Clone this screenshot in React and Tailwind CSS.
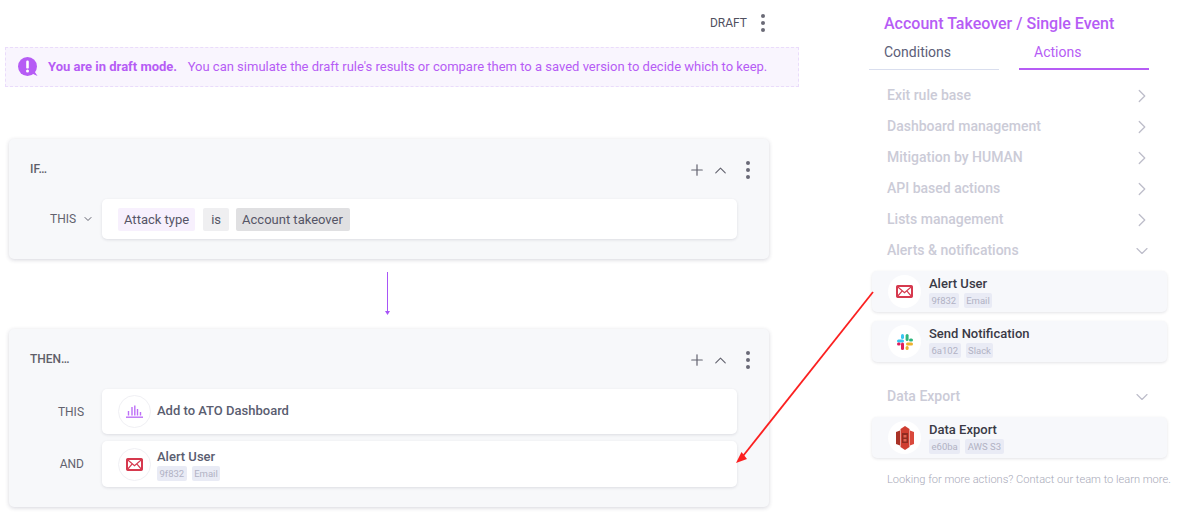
import { ChevronDown, ChevronRight, ChevronUp, Plus } from 'lucide-react';

const Dots = ({ className = '' }) => (
  <svg width="6" height="20" viewBox="0 0 6 20" className={className}>
    <circle cx="3" cy="3" r="2" fill="#6a6a76" />
    <circle cx="3" cy="10" r="2" fill="#6a6a76" />
    <circle cx="3" cy="17" r="2" fill="#6a6a76" />
  </svg>
);

const MailIcon = () => (
  <svg width="17" height="13" viewBox="0 0 17 13" fill="none" stroke="#d6394e">
    <rect x="1" y="1" width="15" height="11" rx="0.8" strokeWidth="2" />
    <path d="M1 1.2 L8.5 7.6 L16 1.2 M1 12 L6.2 5.8 M16 12 L10.8 5.8" strokeWidth="1.2" />
  </svg>
);

const SlackIcon = () => (
  <svg width="16" height="16" viewBox="0 0 16 16">
    <rect x="0" y="5.4" width="7" height="3" rx="1.5" fill="#36c5f0" />
    <rect x="4" y="0" width="3" height="5" rx="1.5" fill="#36c5f0" />
    <rect x="8.6" y="0" width="3" height="7" rx="1.5" fill="#2eb67d" />
    <rect x="12" y="4.4" width="4" height="3" rx="1.5" fill="#2eb67d" />
    <rect x="9" y="8.6" width="7" height="3" rx="1.5" fill="#ecb22e" />
    <rect x="8.6" y="12" width="3" height="4" rx="1.5" fill="#ecb22e" />
    <rect x="4" y="8.6" width="3" height="7.4" rx="1.5" fill="#e01e5a" />
    <rect x="0" y="8.6" width="3.6" height="3" rx="1.5" fill="#e01e5a" />
  </svg>
);

const S3Icon = () => (
  <svg width="18" height="24" viewBox="0 0 18 24">
    <path d="M0 6 L4 4.5 V19.5 L0 18 Z" fill="#a93226" />
    <path d="M18 6 L14 4.5 V19.5 L18 18 Z" fill="#d9483b" />
    <path d="M4.5 3 L9 0 L13.5 3 V21 L9 24 L4.5 21 Z" fill="#cf3d30" />
    <path d="M6 7 H12 V17 H6 Z" fill="#8f2a20" />
    <path d="M7.5 9 H10.5 V11.5 H7.5 Z M7.5 13 H10.5 V15.5 H7.5 Z" fill="#e2604f" />
  </svg>
);

const BarsIcon = () => (
  <svg width="17" height="13" viewBox="0 0 17 13" fill="none" stroke="#bd6ff7" strokeWidth="1.4">
    <path d="M0 12.2 H17" />
    <path d="M2.5 10.5 V6 M6 10.5 V2 M8.8 10.5 V0.5 M11.5 10.5 V4 M14.5 10.5 V7" />
  </svg>
);

const DraftIcon = () => (
  <svg width="20" height="20" viewBox="0 0 20 20" className="shrink-0">
    <circle cx="9.5" cy="9.5" r="9.5" fill="#b65cf5" />
    <path d="M13 16 L19.5 19 L15.5 13 Z" fill="#b65cf5" />
    <rect x="8.2" y="3.6" width="2.6" height="8" rx="1.2" fill="#fff" />
    <circle cx="9.5" cy="14" r="1.5" fill="#fff" />
  </svg>
);

const Tag = ({ children }) => (
  <span className="h-[15px] px-[2.5px] rounded-[2px] bg-[#e9ebf5] text-[#b1b2c4] text-[9.5px] leading-[15px]">
    {children}
  </span>
);

function IconCircle({ children, border }) {
  return (
    <div
      className={`w-[33px] h-[33px] rounded-full bg-white flex items-center justify-center shrink-0 ${
        border ? 'border border-[#f0f0f4]' : ''
      }`}
    >
      {children}
    </div>
  );
}

function BlockHeader({ title }) {
  return (
    <div className="flex items-center justify-between pl-[21px] pr-[18px] h-[20px]">
      <span className="text-[12px] font-medium text-[#5f5f69]">{title}</span>
      <div className="flex items-center mt-[2px] text-[#62626e]">
        <Plus size={18} strokeWidth={1.6} />
        <ChevronUp size={19} strokeWidth={1.4} className="ml-[5px]" />
        <Dots className="ml-[15px]" />
      </div>
    </div>
  );
}

const Row = ({ label, tall, children }) => (
  <div className="flex items-stretch">
    <div className="w-[76px] shrink-0 flex items-center justify-end pr-[1px] text-[12px] text-[#62626e]">{label}</div>
    <div
      className={`ml-[17px] w-[635px] ${tall ? 'h-[46px]' : 'h-[45px]'} bg-white rounded-[5px] shadow-[0_1px_3px_rgba(30,30,60,0.12)] flex items-center pl-[16px] gap-[6px]`}
    >
      {children}
    </div>
  </div>
);

function ActionCard({ title, tags, icon }) {
  return (
    <div className="ml-[3px] w-[295px] h-[41px] rounded-[5px] bg-[#f7f8fb] shadow-[0_1px_3px_rgba(30,30,60,0.12)] flex items-center pl-[16px] gap-[8px]">
      <IconCircle>{icon}</IconCircle>
      <div className="flex flex-col items-start">
        <span className="text-[13px] leading-[15px] font-medium text-[#3a3a46]">{title}</span>
        <div className="flex gap-[5px] mt-[2px]">
          {tags.map((t) => (
            <Tag key={t}>{t}</Tag>
          ))}
        </div>
      </div>
    </div>
  );
}

const SECTIONS = ['Exit rule base', 'Dashboard management', 'Mitigation by HUMAN', 'API based actions', 'Lists management'];

const SectionRow = ({ label, open }) => (
  <div className="h-[31px] flex items-center justify-between pl-[18px] pr-[18px] text-[14px] font-medium text-[#cbcbd7]">
    <span>{label}</span>
    {open ? (
      <ChevronDown size={20} strokeWidth={1.4} className="text-[#bdbdca] -mr-[1px]" />
    ) : (
      <ChevronRight size={22} strokeWidth={1.4} className="text-[#bdbdca] -mr-[2px]" />
    )}
  </div>
);

export default function App() {
  return (
    <div className="relative w-[1179px] h-[516px] overflow-hidden bg-white flex font-['Roboto',sans-serif]">
      <div className="w-[869px] shrink-0">
        <div className="w-[794px] ml-[5px] h-[47px] flex items-center justify-end pb-[2px] pr-[33px]">
          <span className="text-[12px] text-[#50505f]">DRAFT</span>
          <Dots className="ml-[13px]" />
        </div>

        <div className="ml-[5px] w-[794px] h-[40px] border border-dashed border-[#eadcfb] bg-[#f9f5fe] flex items-center pl-[12px] text-[13px] text-[#b65cf5]">
          <DraftIcon />
          <span className="ml-[10px] font-bold">You are in draft mode.</span>
          <span className="ml-[10.5px]">You can simulate the draft rule's results or compare them to a saved version to decide which to keep.</span>
        </div>

        <div className="ml-[9px] mt-[52px] w-[760px] h-[120px] rounded-[5px] bg-[#f7f8fa] shadow-[0_1px_4px_rgba(30,30,60,0.18)] pt-[20px]">
          <BlockHeader title="IF…" />
          <div className="flex items-stretch mt-[20px]">
            <div className="w-[93px] shrink-0 flex items-center pl-[41px] text-[12px] text-[#62626e]">
              THIS
              <ChevronDown size={12} strokeWidth={2} className="ml-[6px]" />
            </div>
            <div className="w-[635px] h-[40px] bg-white rounded-[5px] shadow-[0_1px_3px_rgba(30,30,60,0.12)] flex items-center pl-[16px] text-[13px] text-[#555566]">
              <span className="h-[23px] leading-[23px] px-[6px] bg-[#f7f0fd] rounded-[2px]">Attack type</span>
              <span className="ml-[8px] h-[23px] leading-[23px] px-[8px] bg-[#efeff1] rounded-[2px]">is</span>
              <span className="ml-[7px] h-[23px] leading-[23px] pl-[6px] pr-[7px] bg-[#e0e0e2] rounded-[2px]">Account takeover</span>
            </div>
          </div>
        </div>

        <div className="ml-[378px] mt-[13px] h-[44px] w-[18px]">
          <svg width="18" height="44" viewBox="0 0 18 44" fill="none">
            <path d="M9.5 0 V39" stroke="#a855f7" strokeWidth="1" />
            <path d="M7 39 H12 L9.5 43 Z" fill="#a855f7" />
          </svg>
        </div>

        <div className="ml-[9px] mt-[13px] w-[760px] h-[178px] rounded-[5px] bg-[#f7f8fa] shadow-[0_1px_4px_rgba(30,30,60,0.18)] pt-[20px]">
          <BlockHeader title="THEN…" />
          <div className="flex flex-col gap-[7px] mt-[20px]">
            <Row label="THIS">
              <IconCircle border>
                <BarsIcon />
              </IconCircle>
              <span className="-mt-[2px] text-[13px] font-medium text-[#5a5d70]">Add to ATO Dashboard</span>
            </Row>
            <Row label="AND" tall>
              <IconCircle border>
                <MailIcon />
              </IconCircle>
              <div className="flex flex-col items-start pt-[2px]">
                <span className="text-[13px] leading-[15px] font-medium text-[#5a5d70]">Alert User</span>
                <div className="flex gap-[5px] mt-[2px]">
                  <Tag>9f832</Tag>
                  <Tag>Email</Tag>
                </div>
              </div>
            </Row>
          </div>
        </div>
      </div>

      <div className="w-[310px] shrink-0">
        <div className="pl-[15px] pt-[14px] text-[16px] leading-[19px] font-medium text-[#b65cf5]">
          Account Takeover / Single Event
        </div>
        <div className="flex gap-[20px] mt-[7px]">
          <div className="w-[130px] h-[30px] border-b border-[#d9deee] pl-[15px] text-[14px] leading-[24px] text-[#5c5e78]">Conditions</div>
          <div className="w-[130px] h-[30px] border-b-2 border-[#b65cf5] pl-[15px] text-[14px] leading-[24px] text-[#b65cf5]">Actions</div>
        </div>
        <div className="mt-[10px] w-[300px]">
          {SECTIONS.map((s) => (
            <SectionRow key={s} label={s} />
          ))}
          <SectionRow label="Alerts & notifications" open />
        </div>
        <div className="flex flex-col gap-[9px] mt-[5px]">
          <ActionCard title="Alert User" tags={['9f832', 'Email']} icon={<MailIcon />} />
          <ActionCard title="Send Notification" tags={['6a102', 'Slack']} icon={<SlackIcon />} />
        </div>
        <div className="mt-[19px] w-[300px]">
          <SectionRow label="Data Export" open />
        </div>
        <div className="mt-[5px]">
          <ActionCard title="Data Export" tags={['e60ba', 'AWS S3']} icon={<S3Icon />} />
        </div>
        <p className="mt-[15px] pl-[18px] text-[11.1px] leading-[13px] font-light whitespace-nowrap text-[#a8a9b8]">
          Looking for more actions? Contact our team to learn more.
        </p>
      </div>

      {/* annotation arrow over the page */}
      <svg className="absolute left-0 top-0 pointer-events-none" width="1179" height="516" fill="none">
        <path d="M873 292 L743 456" stroke="#fb2020" strokeWidth="1.8" />
        <path d="M736 463 L741.5 452 L747 459 Z" fill="#fb2020" />
      </svg>
    </div>
  );
}
